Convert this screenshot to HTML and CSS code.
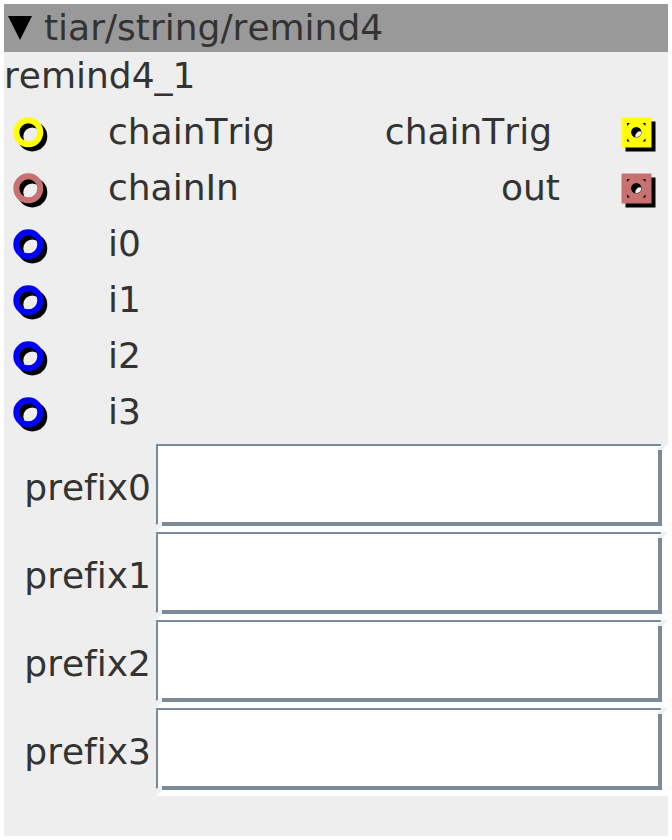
FILE: index.html
```html
<!DOCTYPE html>
<html lang="en">

<head>
    <meta charset="UTF-8">
    <title>tiar/string/remind4</title>
    <link rel="stylesheet" href="styles.css">
</head>

<body>
    <svg class="defs">
        <symbol id="inlet" viewBox="0 0 40 40">
            <circle cx="20.3" cy="24.4" r="12" fill="none" stroke="#000" stroke-width="6" />
            <circle cx="16.3" cy="20.3" r="12" fill="none" stroke="currentColor" stroke-width="6" />
        </symbol>
        <symbol id="outlet" viewBox="0 0 40 40">
            <path d="M9.5 9.5h30v30h-30z" fill="#000" />
            <path d="M5.5 5.5h30v30h-30z" fill="currentColor" />
            <path d="M11 11h3l-3 3zM29.500 11v3l-3-3zM11 29.500v-3l3 3zM29.500 29.500h-3l3-3z" fill="#000" />
            <circle cx="20.3" cy="20.3" r="5.2" fill="#000" />
            <path d="M25.2 19.4A5 5 0 0 1 19.4 25.2A5 5 0 0 1 25.2 19.4z" fill="#eee" />
        </symbol>
        <symbol id="frame" viewBox="0 0 512 88">
            <path d="M0 0h512v88H0z" fill="#fff" />
            <path d="M0 0h505v2H2v78l-2 1z" fill="#7a8a99" />
            <path d="M502 6h4v76H6v-4h496z" fill="#7a8a99" />
            <path d="M506 0h6l-6 6h-1.500v-1h-1v1H502V3h2zM0 88v-6l4-4h2v1.500H5v1h1V82z" fill="#eee" />
        </symbol>
    </svg>

    <div class="object">
        <div class="titlebar">
            <svg class="arrow" viewBox="0 0 24 24"><path d="M0 0h24L12 24z" /></svg>
            <span>tiar/string/remind4</span>
        </div>
        <div class="name">remind4_1</div>

        <div class="row">
            <svg class="port yellow"><use href="#inlet" /></svg>
            <span class="in">chainTrig</span>
            <span class="out">chainTrig</span>
            <svg class="port yellow"><use href="#outlet" /></svg>
        </div>
        <div class="row">
            <svg class="port red"><use href="#inlet" /></svg>
            <span class="in">chainIn</span>
            <span class="out short">out</span>
            <svg class="port red"><use href="#outlet" /></svg>
        </div>
        <div class="row">
            <svg class="port blue"><use href="#inlet" /></svg>
            <span class="in">i0</span>
        </div>
        <div class="row">
            <svg class="port blue"><use href="#inlet" /></svg>
            <span class="in">i1</span>
        </div>
        <div class="row">
            <svg class="port blue"><use href="#inlet" /></svg>
            <span class="in">i2</span>
        </div>
        <div class="row">
            <svg class="port blue"><use href="#inlet" /></svg>
            <span class="in">i3</span>
        </div>

        <div class="params">
            <div class="param">
                <span>prefix0</span>
                <svg class="field"><use href="#frame" /></svg>
            </div>
            <div class="param">
                <span>prefix1</span>
                <svg class="field"><use href="#frame" /></svg>
            </div>
            <div class="param">
                <span>prefix2</span>
                <svg class="field"><use href="#frame" /></svg>
            </div>
            <div class="param">
                <span>prefix3</span>
                <svg class="field"><use href="#frame" /></svg>
            </div>
        </div>
    </div>
</body>

</html>
```
FILE: styles.css
```css
body {
    margin: 0;
    padding: 4px;
    background-color: #fff;
    color: #333;
    font-family: "DejaVu Sans", sans-serif;
    font-size: 36px;
    font-kerning: none;
    font-variant-ligatures: none;
    white-space: nowrap;
}

.defs {
    display: none;
}

.object {
    width: 664px;
    height: 832px;
    background-color: #eee;
}

.object span {
    padding-bottom: 2px;
}

.titlebar {
    display: flex;
    align-items: center;
    gap: 12px;
    height: 48px;
    padding-left: 4px;
    background-color: #999;
}

.arrow {
    width: 24px;
    height: 24px;
}

.name {
    height: 48px;
    margin-bottom: 4px;
    line-height: 48px;
}

.row {
    display: flex;
    align-items: center;
    height: 56px;
    padding: 0 12px 0 8px;
}

.port {
    width: 40px;
    height: 40px;
}

.yellow {
    color: #ff0;
}

.red {
    color: #c87171;
}

.blue {
    color: #00f;
}

.in {
    margin-left: 56px;
}

.out {
    margin-left: auto;
    margin-right: 64px;
}

.short {
    margin-right: 56px;
}

.params {
    padding-top: 4px;
}

.param {
    display: flex;
    align-items: center;
    justify-content: flex-end;
    gap: 5px;
    height: 88px;
}

.field {
    width: 512px;
    height: 88px;
}
```
